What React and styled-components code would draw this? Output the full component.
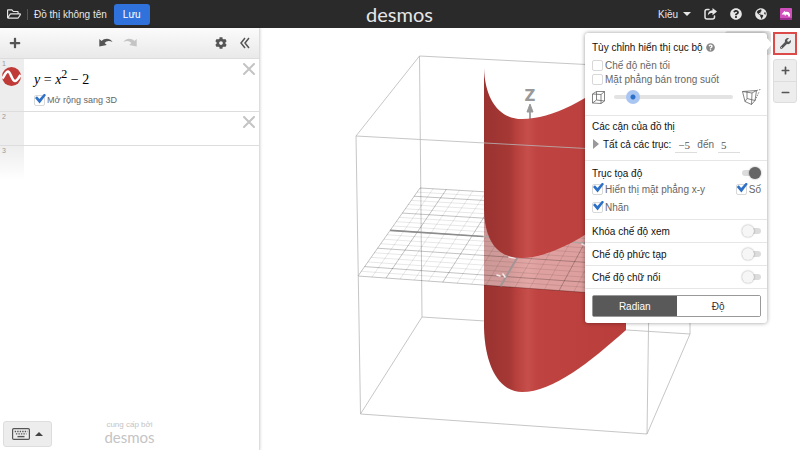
import React, { useState } from 'react';
import styled, { createGlobalStyle } from 'styled-components';
import {
  FaRegFolderOpen,
  FaQuestionCircle,
  FaGlobeAmericas,
  FaWrench,
  FaCog,
  FaPlus,
  FaMinus,
} from 'react-icons/fa';

const GlobalStyle = createGlobalStyle`
  * {
    box-sizing: border-box;
  }

  body {
    margin: 0;
    font-family: 'Liberation Sans', Arial, sans-serif;
    font-size: 10px;
    color: #111;
    background: #fff;
  }

  button {
    font: inherit;
    color: inherit;
    padding: 0;
    border: 0;
    background: none;
    cursor: pointer;
  }
`;

// corners of the xy plane: back left, back right, front right, front left
const PLANE = [
  [420, 188],
  [692, 204],
  [649, 297],
  [358, 276],
];

// maps the -5..5 square to the plane with perspective
const project = (x, y) => {
  const [[x0, y0], [x1, y1], [x2, y2], [x3, y3]] = PLANE;
  const u = (x + 5) / 10;
  const v = (5 - y) / 10;
  const dx1 = x1 - x2;
  const dx2 = x3 - x2;
  const dx3 = x0 - x1 + x2 - x3;
  const dy1 = y1 - y2;
  const dy2 = y3 - y2;
  const dy3 = y0 - y1 + y2 - y3;
  const det = dx1 * dy2 - dx2 * dy1;
  const g = (dx3 * dy2 - dx2 * dy3) / det;
  const h = (dx1 * dy3 - dx3 * dy1) / det;
  const w = g * u + h * v + 1;
  return [
    ((x1 - x0 + g * x1) * u + (x3 - x0 + h * x3) * v + x0) / w,
    ((y1 - y0 + g * y1) * u + (y3 - y0 + h * y3) * v + y0) / w,
  ];
};

const line = (from, to) => `M${project(...from)}L${project(...to)}`;

const steps = Array.from({ length: 21 }, (_, i) => i / 2 - 5);
const gridPath = values =>
  values.map(n => line([n, -5], [n, 5]) + line([-5, n], [5, n])).join('');

const minorGrid = gridPath(steps.filter(n => n % 2 !== 0));
const majorGrid = gridPath([-4, -2, 0, 2, 4]);
const planeEdge = `M${PLANE.map(p => p.join(',')).join('L')}Z`;

const Scene = () => (
  <Canvas
    viewBox="260 28 540 422"
    preserveAspectRatio="xMinYMin meet"
    role="img"
    aria-label="y = x² − 2"
  >
    <defs>
      <linearGradient
        id="surface"
        gradientUnits="userSpaceOnUse"
        x1="484"
        x2="626"
        y1="0"
        y2="0"
      >
        <stop offset="0" stopColor="#9a3330" />
        <stop offset="0.18" stopColor="#a63835" />
        <stop offset="0.23" stopColor="#b8413e" />
        <stop offset="0.31" stopColor="#c64e4b" />
        <stop offset="0.38" stopColor="#bf4340" />
        <stop offset="1" stopColor="#b93d3a" />
      </linearGradient>
      <clipPath id="onSurface">
        <path d="M484 180H626V340H484Z" />
      </clipPath>
    </defs>

    <g fill="none" stroke="#b8b8b8" strokeWidth="0.8">
      <path d="M356 136L419.500 56L694 70M419.500 56L422 317L690 334L690 70" />
      <path d="M422 317L360.500 414L647 434L690 334" />
    </g>

    <path
      fill="url(#surface)"
      d="M484 190V328C485 366 499 392 522 392C553 392 590 362 626 330V190Z"
    />
    <path
      d={planeEdge}
      fill="#fff"
      fillOpacity="0.5"
      clipPath="url(#onSurface)"
    />
    <g fill="none">
      <path
        d={minorGrid}
        stroke="#000"
        strokeOpacity="0.12"
        strokeWidth="0.8"
      />
      <path
        d={majorGrid}
        stroke="#000"
        strokeOpacity="0.3"
        strokeWidth="0.8"
      />
      <path
        d={planeEdge}
        stroke="#000"
        strokeOpacity="0.2"
        strokeWidth="0.8"
      />
      <path
        d={line([-5, 0], [-1.6, 0])}
        stroke="#8c8c8c"
        strokeWidth="1.600"
      />
      <path d={line([-1.6, 0], [5, 0])} stroke="#b3a3a3" strokeWidth="1.600" />
      <path d={line([0, -5], [0, 0])} stroke="#a39595" strokeWidth="2" />
    </g>
    <g fill="none" stroke="#f4eaea" strokeWidth="1.600" strokeLinecap="round">
      <path d="M509 257L515 258M497 275L500 276M503 274L505 277" />
      <path d="M582 244L586 246" />
    </g>

    <path d="M530 105V124" stroke="#a3a3a3" strokeWidth="2" />
    <path
      fill="url(#surface)"
      d="M484 68C485 98 498 119 522 119C553 119 588 99 626 70V205C590 236 549 258 522 258C497 258 485 241 484 210Z"
    />
    <path d="M530 104L533 112H527Z" fill="#999" stroke="#999" />
    <AxisName x="530" y="101" textAnchor="middle">
      Z
    </AxisName>

    <g fill="none" stroke="#b8b8b8" strokeWidth="0.8">
      <path d="M356 136L651 152L647 434M356 136L360.500 414" />
    </g>
  </Canvas>
);

const UndoIcon = () => (
  <svg width="14" height="10" viewBox="0 0 14 10">
    <path
      fill="currentColor"
      d="M0.300 1L2.600 3C5.500 0 11 0 13.500 4C10.500 2.300 7.500 2.600 5.600 5L7.800 7L0.300 8.600Z"
    />
  </svg>
);

const CollapseIcon = () => (
  <svg width="10" height="12" viewBox="0 0 10 12">
    <path
      fill="none"
      stroke="currentColor"
      strokeWidth="1.5"
      d="M5 1L1 6L5 11M9 1L5 6L9 11"
    />
  </svg>
);

const ShareIcon = () => (
  <svg width="13" height="12" viewBox="0 0 13 12">
    <path
      fill="none"
      stroke="currentColor"
      strokeWidth="1.500"
      strokeLinecap="round"
      d="M5 1.500H3Q1 1.500 1 3.500V9Q1 11 3 11H8.500Q10.500 11 10.500 9V8"
    />
    <path
      fill="currentColor"
      d="M8.500 0L13 3.600L8.500 7.200V5C6.500 5 5 5.600 3.800 7.600C3.800 4.500 5.500 2.300 8.500 2.200Z"
    />
  </svg>
);

const AvatarIcon = () => (
  <svg width="12" height="12" viewBox="0 0 12 12">
    <rect width="12" height="12" rx="1" fill="#d04fbc" />
    <path d="M0 10H12V12H0Z" fill="#9c2f90" />
    <path
      fill="#fff"
      d="M1.500 6.500L4.500 3L5.500 4C8.500 3.200 10.500 5 10 8.500H8.200C8.300 7 7.500 6.300 6.500 6.500L5 8L4.500 6.500Z"
    />
  </svg>
);

const CurveIcon = () => (
  <svg width="19" height="19" viewBox="0 0 19 19">
    <circle cx="9.500" cy="9.500" r="9.500" fill="#c03a37" />
    <path
      fill="none"
      stroke="#fff"
      strokeWidth="2.600"
      strokeLinejoin="round"
      d="M0.500 11.500C2.500 8.500 4 4.500 6 4.500C8.500 4.500 10 14 13 14C15 14 16.500 11 18.500 8"
    />
  </svg>
);

const CloseIcon = () => (
  <svg width="12" height="12" viewBox="0 0 12 12">
    <path
      stroke="currentColor"
      strokeWidth="2"
      strokeLinecap="round"
      d="M1 1L11 11M11 1L1 11"
    />
  </svg>
);

const KeyboardIcon = () => (
  <svg width="18" height="12" viewBox="0 0 18 12">
    <rect
      x="0.600"
      y="0.600"
      width="16.800"
      height="10.800"
      rx="1.200"
      fill="none"
      stroke="currentColor"
      strokeWidth="1.200"
    />
    <path
      stroke="currentColor"
      strokeWidth="1.400"
      strokeDasharray="1.400 1.100"
      d="M2.700 3.500H15.500M3.900 5.900H14.500"
    />
    <path stroke="currentColor" strokeWidth="1.400" d="M5.500 8.600H12.500" />
  </svg>
);

const BoxIcon = () => (
  <svg width="13" height="13" viewBox="0 0 13 13">
    <path
      fill="none"
      stroke="currentColor"
      strokeWidth="0.800"
      d="M0.500 3L4.500 0.500H12.500V10L9 12.500L0.500 12ZM0.500 3L9 3.500L12.500 0.500M9 3.500V12.500M4.500 0.500V9L0.500 12M4.500 9L12.500 10"
    />
  </svg>
);

const PerspectiveIcon = () => (
  <svg width="19" height="16" viewBox="0 0 19 16">
    <g fill="none" stroke="currentColor" strokeWidth="0.800">
      <path d="M0.500 2.500L14.500 1.500L13 11.500L9.500 15.500L3 12.500ZM0.500 2.500L10 4L14.500 1.500M10 4L9.500 15.500M5 2V9.500L3 12.500M5 9.500L13 11.500" />
      <path strokeDasharray="1.500 1" d="M14.500 1.500L18.500 0.500M13 11.500L17 3" />
    </g>
  </svg>
);

const Check = ({ label, defaultChecked, small }) => (
  <CheckLabel $small={small}>
    <CheckBox type="checkbox" defaultChecked={defaultChecked} />
    {label}
  </CheckLabel>
);

const SwitchRow = ({ label, defaultChecked }) => (
  <SwitchLabel>
    {label}
    <Switch type="checkbox" role="switch" defaultChecked={defaultChecked} />
  </SwitchLabel>
);

const SettingsPanel = () => {
  const [unit, setUnit] = useState('radian');

  return (
    <Panel>
      <Section $pad="5px 6px 7px 7px">
        <Title>
          Tùy chỉnh hiển thị cục bộ <FaQuestionCircle size={9} color="#888" />
        </Title>
        <Checks>
          <Check label="Chế độ nền tối" />
          <Check label="Mặt phẳng bán trong suốt" />
        </Checks>
        <SliderRow>
          <BoxIcon />
          <Slider type="range" defaultValue="11" aria-label="Phối cảnh" />
          <PerspectiveIcon />
        </SliderRow>
      </Section>
      <Section $pad="1px 6px 7px 7px">
        <Title>Các cận của đồ thị</Title>
        <Bounds>
          <Expand aria-label="Mở rộng" />
          <span>Tất cả các trục:</span>
          <BoundInput defaultValue="−5" aria-label="Từ" />
          <Muted>đến</Muted>
          <BoundInput defaultValue="5" aria-label="Đến" />
        </Bounds>
      </Section>
      <Section $pad="5px 6px 3px 7px">
        <SwitchRow label="Trục tọa độ" defaultChecked />
        <CheckRow>
          <Check label="Hiển thị mặt phẳng x-y" defaultChecked />
          <Check label="Số" defaultChecked />
        </CheckRow>
        <CheckRow>
          <Check label="Nhãn" defaultChecked />
        </CheckRow>
      </Section>
      <Section $pad="4px 6px 4px 7px">
        <SwitchRow label="Khóa chế độ xem" />
      </Section>
      <Section $pad="4px 6px 4px 7px">
        <SwitchRow label="Chế độ phức tạp" />
      </Section>
      <Section $pad="4px 6px 4px 7px">
        <SwitchRow label="Chế độ chữ nổi" />
      </Section>
      <Units>
        <UnitButton
          $active={unit === 'radian'}
          onClick={() => setUnit('radian')}
        >
          Radian
        </UnitButton>
        <UnitButton $active={unit === 'degree'} onClick={() => setUnit('degree')}>
          Độ
        </UnitButton>
      </Units>
    </Panel>
  );
};

const App = () => (
  <Page>
    <GlobalStyle />
    <Header>
      <HeaderSide>
        <HeaderButton aria-label="Mở đồ thị">
          <FaRegFolderOpen size={14} />
        </HeaderButton>
        <GraphName>Đồ thị không tên</GraphName>
        <SaveButton>Lưu</SaveButton>
      </HeaderSide>
      <Logo>desmos</Logo>
      <HeaderSide $end>
        <Account>
          Kiều <CaretDown />
        </Account>
        <HeaderButton aria-label="Chia sẻ">
          <ShareIcon />
        </HeaderButton>
        <HeaderButton aria-label="Trợ giúp">
          <FaQuestionCircle size={12} />
        </HeaderButton>
        <HeaderButton aria-label="Ngôn ngữ">
          <FaGlobeAmericas size={12} />
        </HeaderButton>
        <HeaderButton aria-label="Hồ sơ">
          <AvatarIcon />
        </HeaderButton>
      </HeaderSide>
    </Header>

    <Main>
      <Sidebar>
        <Toolbar>
          <ToolButton aria-label="Thêm">
            <FaPlus size={12} />
          </ToolButton>
          <History>
            <ToolButton aria-label="Hoàn tác">
              <UndoIcon />
            </ToolButton>
            <ToolButton aria-label="Làm lại" $flip $faded>
              <UndoIcon />
            </ToolButton>
          </History>
          <ToolGroup>
            <ToolButton aria-label="Cài đặt">
              <FaCog size={12} />
            </ToolButton>
            <ToolButton aria-label="Ẩn danh sách">
              <CollapseIcon />
            </ToolButton>
          </ToolGroup>
        </Toolbar>

        <Expression $height={53}>
          <Gutter>
            1
            <CurveIcon />
          </Gutter>
          <Content>
            <Formula>
              <i>y</i> = <i>x</i>
              <sup>2</sup> − 2
            </Formula>
            <Check label="Mở rộng sang 3D" small defaultChecked />
          </Content>
          <CloseButton aria-label="Xóa">
            <CloseIcon />
          </CloseButton>
        </Expression>
        <Expression $height={34}>
          <Gutter>2</Gutter>
          <Content />
          <CloseButton aria-label="Xóa">
            <CloseIcon />
          </CloseButton>
        </Expression>
        <Expression $height={34} $last>
          <Gutter $fade>3</Gutter>
        </Expression>

        <SidebarFooter>
          <KeypadButton aria-label="Bàn phím">
            <KeyboardIcon />
            <CaretUp />
          </KeypadButton>
          <Powered>
            cung cấp bởi
            <PoweredLogo>desmos</PoweredLogo>
          </Powered>
        </SidebarFooter>
      </Sidebar>

      <Graph>
        <Scene />
        <Overlay>
          <SettingsPanel />
          <Controls>
            <WrenchButton aria-label="Cài đặt đồ thị">
              <FaWrench size={11} />
            </WrenchButton>
            <Zoom>
              <ZoomButton aria-label="Phóng to">
                <FaPlus size={9} />
              </ZoomButton>
              <ZoomButton aria-label="Thu nhỏ">
                <FaMinus size={9} />
              </ZoomButton>
            </Zoom>
          </Controls>
        </Overlay>
      </Graph>
    </Main>
  </Page>
);

export default App;

const Page = styled.div`
  display: flex;
  flex-direction: column;
  height: 100vh;
  overflow: hidden;
`;

const Header = styled.header`
  display: flex;
  align-items: center;
  flex: 0 0 28px;
  padding: 0 8px 0 7px;
  background: #2a2a2a;
  color: #e6e6e6;
`;

const HeaderSide = styled.div`
  display: flex;
  align-items: center;
  flex: 1;
  gap: ${({ $end }) => ($end ? '13px' : '6px')};
  justify-content: ${({ $end }) => ($end ? 'flex-end' : 'flex-start')};
`;

const HeaderButton = styled.button`
  display: flex;
`;

const GraphName = styled.span`
  padding: 0 1px 0 6px;
  border-left: 1px solid #555;
`;

const SaveButton = styled.button`
  height: 21px;
  padding: 0 9px;
  border-radius: 3px;
  background: #2f72dc;
  color: #fff;
`;

const Logo = styled.div`
  font-family: Lato, sans-serif;
  font-size: 20px;
  line-height: 24px;
`;

const Account = styled.button`
  display: flex;
  align-items: center;
  gap: 5px;
`;

const CaretDown = styled.span`
  border: 4px solid transparent;
  border-bottom: 0;
  border-top-color: #e6e6e6;
`;

const Main = styled.main`
  display: flex;
  flex: 1;
  min-height: 0;
`;

const Sidebar = styled.aside`
  display: flex;
  flex-direction: column;
  flex: 0 0 260px;
  border-right: 1px solid #ddd;
  box-shadow: 0 0 3px rgba(0, 0, 0, 0.2);
  z-index: 1;
`;

const Toolbar = styled.div`
  display: grid;
  grid-template-columns: 1fr auto 1fr;
  align-items: center;
  height: 31px;
  padding: 0 9px;
  border-bottom: 1px solid #ddd;
  background: linear-gradient(#fbfbfb, #e9e9e9);
  color: #555;
`;

const ToolButton = styled.button`
  display: flex;
  color: ${({ $faded }) => ($faded ? '#c4c4c4' : '#555')};
  transform: ${({ $flip }) => ($flip ? 'scaleX(-1)' : 'none')};
`;

const History = styled.div`
  display: flex;
  gap: 10px;
  margin-right: 24px;
`;

const ToolGroup = styled.div`
  display: flex;
  align-items: center;
  justify-content: flex-end;
  gap: 13px;
`;

const Expression = styled.div`
  display: flex;
  min-height: ${({ $height }) => $height}px;
  border-bottom: ${({ $last }) => ($last ? '0' : '1px solid #ddd')};
`;

const Gutter = styled.div`
  display: flex;
  flex-direction: column;
  flex: 0 0 24px;
  padding: 1px 2px;
  font-size: 7px;
  line-height: 7px;
  color: #999;
  background: ${({ $fade }) =>
    $fade ? 'linear-gradient(#ededed, #fff)' : '#ededed'};
`;

const Content = styled.div`
  flex: 1;
  padding: 8px 10px 0;
`;

const Formula = styled.div`
  height: 26px;
  font-family: 'Liberation Serif', serif;
  font-size: 14px;
  line-height: 26px;
  color: #000;

  sup {
    font-size: 12px;
    line-height: 0;
  }
`;

const CloseButton = styled.button`
  display: flex;
  align-self: flex-start;
  padding: 4px;
  color: #c4c4c4;
`;

const SidebarFooter = styled.div`
  display: grid;
  grid-template-columns: 1fr auto 1fr;
  align-items: end;
  margin-top: auto;
  padding: 0 3px 3px;
`;

const KeypadButton = styled.button`
  display: flex;
  align-items: center;
  justify-self: start;
  gap: 5px;
  height: 26px;
  padding: 0 8px;
  border: 1px solid #ddd;
  border-radius: 3px;
  background: #ededed;
  color: #555;
`;

const CaretUp = styled.span`
  border: 4px solid transparent;
  border-top: 0;
  border-bottom-color: #444;
`;

const Powered = styled.div`
  display: flex;
  flex-direction: column;
  align-items: center;
  padding-bottom: 2px;
  font-size: 8px;
  line-height: 8px;
  color: #c4c4c4;
`;

const PoweredLogo = styled.span`
  font-family: Lato, sans-serif;
  font-size: 15px;
  line-height: 16px;
`;

const Graph = styled.section`
  position: relative;
  flex: 1;
  min-width: 0;
`;

const Canvas = styled.svg`
  display: block;
  width: 100%;
  height: 100%;
`;

const AxisName = styled.text`
  font-family: 'DejaVu Sans', sans-serif;
  font-size: 15px;
  font-weight: bold;
  fill: #999;
`;

const Overlay = styled.div`
  position: absolute;
  z-index: 0;
  top: 4px;
  right: 3px;
  display: flex;
  align-items: flex-start;
  gap: 6px;
`;

const Panel = styled.div`
  position: relative;
  width: 182px;
  margin-top: 1px;
  padding-bottom: 6px;
  border-radius: 3px;
  background: #fff;
  box-shadow: 0 0 4px rgba(0, 0, 0, 0.4);

  /* the tab and the arrow that point at the wrench */
  &::before {
    content: '';
    position: absolute;
    z-index: -1;
    top: -2px;
    right: -4px;
    width: 46px;
    height: 24px;
    border-radius: 3px;
    background: #e3e3e3;
  }

  &::after {
    content: '';
    position: absolute;
    top: 5px;
    right: -5px;
    border: 6px solid transparent;
    border-left: 5px solid #fff;
    border-right: 0;
  }
`;

const Section = styled.div`
  display: flex;
  flex-direction: column;
  padding: ${({ $pad }) => $pad};
  border-bottom: 1px solid #e6e6e6;
`;

const Title = styled.div`
  display: flex;
  align-items: center;
  gap: 3px;
  height: 18px;
`;

const Checks = styled.div`
  padding-top: 2px;
`;

const CheckLabel = styled.label`
  display: flex;
  align-items: center;
  gap: 2px;
  height: 14px;
  font-size: ${({ $small }) => ($small ? '9px' : '10px')};
  color: #666;
`;

const CheckBox = styled.input`
  position: relative;
  appearance: none;
  width: 11px;
  height: 11px;
  margin: 0;
  border: 1px solid #d8d8d8;
  border-radius: 2px;
  background: #fff;

  &:checked::after {
    content: '';
    position: absolute;
    inset: -2px -2px 1px 0;
    background: #2d70c8;
    clip-path: polygon(0 45%, 18% 28%, 40% 55%, 85% 0, 100% 15%, 42% 100%);
  }
`;

const SliderRow = styled.div`
  display: flex;
  align-items: center;
  gap: 9px;
  height: 22px;
  color: #666;
`;

const Slider = styled.input`
  appearance: none;
  flex: 1;
  min-width: 0;
  height: 4px;
  margin: 0;
  border-radius: 2px;
  background: #e3e3e3;

  &::-webkit-slider-thumb {
    appearance: none;
    width: 14px;
    height: 14px;
    border-radius: 50%;
    background: radial-gradient(#2d70c8 0 2px, #a9c6f2 3px);
  }
`;

const Bounds = styled.div`
  display: flex;
  align-items: center;
  height: 18px;
`;

const Expand = styled.button`
  margin: 0 4px 0 1px;
  border: 5px solid transparent;
  border-left: 6px solid #999;
  border-right: 0;
`;

const BoundInput = styled.input`
  width: 22px;
  height: 18px;
  margin: 0 0 0 4px;
  padding: 2px 3px 0;
  border: 0;
  border-bottom: 1px solid #ddd;
  background: none;
  font-family: 'Liberation Serif', serif;
  font-size: 11px;
  color: #555;
`;

const Muted = styled.span`
  color: #666;
`;

const CheckRow = styled.div`
  display: flex;
  align-items: center;
  justify-content: space-between;
  height: 18px;
`;

const SwitchLabel = styled.label`
  display: flex;
  align-items: center;
  justify-content: space-between;
  height: 14px;
`;

const Switch = styled.input`
  position: relative;
  appearance: none;
  width: 19px;
  height: 6px;
  margin: 0;
  border-radius: 3px;
  background: #dcdcdc;

  &::after {
    content: '';
    position: absolute;
    top: -3px;
    left: 0;
    width: 12px;
    height: 12px;
    border-radius: 50%;
    background: #f6f6f6;
    box-shadow: 0 0 2px rgba(0, 0, 0, 0.4);
  }

  &:checked::after {
    left: 7px;
    background: #666;
  }
`;

const Units = styled.div`
  display: flex;
  margin: 6px 6px 0 7px;
  border: 1px solid #999;
  border-radius: 2px;
`;

const UnitButton = styled.button`
  flex: 1;
  height: 20px;
  background: ${({ $active }) => ($active ? '#595959' : '#fff')};
  color: ${({ $active }) => ($active ? '#fff' : '#333')};
`;

const Controls = styled.div`
  display: flex;
  flex-direction: column;
  gap: 4px;
  width: 24px;
`;

const WrenchButton = styled.button`
  display: flex;
  align-items: center;
  justify-content: center;
  height: 23px;
  border: 2px solid #dc4a4a;
  background: #ededed;
  color: #555;
`;

const Zoom = styled.div`
  display: flex;
  flex-direction: column;
  border: 1px solid #ddd;
  border-radius: 3px;
  background: #ededed;
`;

const ZoomButton = styled.button`
  display: flex;
  align-items: center;
  justify-content: center;
  height: 21px;
  color: #555;

  & + & {
    border-top: 1px solid #ddd;
  }
`;
